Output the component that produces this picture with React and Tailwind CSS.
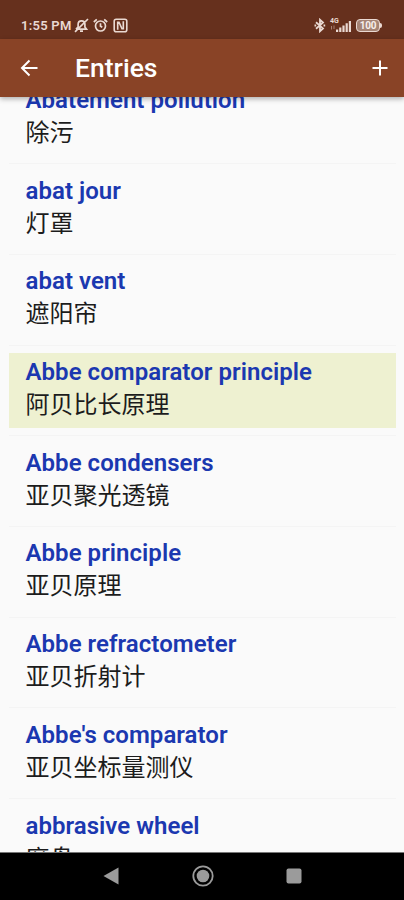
import React from 'react';

const ENTRIES = [
  { term: 'Abatement pollution', translation: '除污' },
  { term: 'abat jour', translation: '灯罩' },
  { term: 'abat vent', translation: '遮阳帘' },
  { term: 'Abbe comparator principle', translation: '阿贝比长原理', selected: true },
  { term: 'Abbe condensers', translation: '亚贝聚光透镜' },
  { term: 'Abbe principle', translation: '亚贝原理' },
  { term: 'Abbe refractometer', translation: '亚贝折射计' },
  { term: "Abbe's comparator", translation: '亚贝坐标量测仪' },
  { term: 'abbrasive wheel', translation: '磨盘' },
];

function StatusBar() {
  return (
    <div className="h-[39px] shrink-0 bg-[#66301d] text-[#ead9d2] flex items-start justify-between pl-[21px] pr-[21px] pt-[17px]">
      <div className="flex items-center h-[17px]">
        <span className="text-[13px] leading-[17px] font-semibold tracking-[0.25px] w-[53px] whitespace-nowrap">1:55 PM</span>
        {/* muted bell */}
        <svg width="15" height="15" viewBox="0 0 15 15" fill="none" stroke="currentColor" strokeWidth="1.7">
          <path d="M2 11.2h10.5L10.9 9V6.3c0-2.1-1.300-3.400-3.400-3.400S4.100 4.200 4.100 6.300V9L2 11.200M6 13.200h3M14 1 1 13.800" />
        </svg>
        {/* alarm */}
        <svg width="15" height="15" viewBox="0 0 15 15" fill="none" stroke="currentColor" strokeWidth="1.7" className="ml-[4px]">
          <circle cx="7.5" cy="8" r="5" />
          <path d="M7.5 5.300V8.300L9.300 9.300M.8 4 3.800 1.300M14.200 4 11.200 1.300" />
        </svg>
        {/* nfc */}
        <svg width="15" height="15" viewBox="0 0 15 15" fill="none" stroke="currentColor" strokeWidth="1.6" className="ml-[5px]">
          <rect x="1.2" y="1.2" width="12.6" height="12.6" rx="2" />
          <path d="M4.700 11.800V4.200h1.300L9 10.800h1.300V3.200" />
        </svg>
      </div>
      <div className="flex items-center h-[17px] pr-[1px]">
        <svg width="12" height="15" viewBox="0 0 12 15" fill="none" stroke="currentColor" strokeWidth="1.8">
          <path d="M2 4.300 9 10.400 6 13.200V1.800L9 4.600 2 10.700" />
          <path d="M.5 7.500h1.700M9.500 7.500h1.700" />
        </svg>
        <div className="flex items-end h-[15px] ml-[4px]">
          <div className="flex flex-col w-[9px] h-[15px]">
            <span className="text-[7px] leading-[7px] font-bold">4G</span>
            <svg width="6" height="5" viewBox="0 0 6 5" fill="none" stroke="currentColor" strokeWidth="0.8" opacity="0.6">
              <path d="M1.500 4.500V1M4 .5V4" />
            </svg>
          </div>
          <svg width="15" height="14" viewBox="0 0 15 14" fill="currentColor" className="-ml-[3px]">
            <path d="M0 10.500h2.200V13H0zM3.200 8.500h2.200V13H3.200zM6.400 6.500h2.200V13H6.400zM9.600 4.200h2.200V13H9.600zM12.800 2H15V13h-2.200z" />
          </svg>
        </div>
        <div className="flex items-center ml-[5px]">
          <div className="w-[24px] h-[13px] rounded-[4px] border border-current bg-[#a58475] flex items-center justify-center">
            <span className="text-[10px] leading-[10px] font-bold text-[#f7efeb] tracking-[-0.3px]">100</span>
          </div>
          <div className="w-[2px] h-[5px] rounded-r bg-current" />
        </div>
      </div>
    </div>
  );
}

function AppBar() {
  return (
    <div className="relative z-10 h-[58px] shrink-0 bg-[#894326] text-white flex items-center pl-[20px] pr-[16px] shadow-[0_2px_5px_rgba(0,0,0,0.3)]">
      <svg width="18" height="18" viewBox="0 0 18 18" fill="none" stroke="currentColor" strokeWidth="2">
        <path d="M17.500 9H2.500M9.500 1.500 2 9l7.500 7.500" />
      </svg>
      <h1 className="ml-[37px] text-[26.5px] leading-[32px] font-medium">Entries</h1>
      <svg width="16" height="16" viewBox="0 0 16 16" fill="none" stroke="currentColor" strokeWidth="2" className="ml-auto">
        <path d="M8 .5v15M.5 8h15" />
      </svg>
    </div>
  );
}

function Entry({ term, translation, selected }) {
  return (
    <li>
      <div className={`h-[75px] pl-[16.5px] pt-[3px] ${selected ? 'bg-[#eef1d1]' : ''}`}>
        <p className="text-[24px] leading-[32px] tracking-[0.04px] font-semibold text-[#1b38b0] whitespace-nowrap">{term}</p>
        <p className="text-[24px] leading-[30px] text-[#1c1c1c] whitespace-nowrap font-[Noto_Sans_CJK_SC,sans-serif] font-normal">{translation}</p>
      </div>
      <div className="h-[15.7px] flex items-center">
        <div className="h-px w-full bg-[#f4f4f4]" />
      </div>
    </li>
  );
}

function NavBar() {
  return (
    <div className="h-[48px] shrink-0 bg-black border-t border-[#777] flex items-center text-[#9b9b9b] pl-[103px] pr-[102px] pb-[2px] justify-between">
      <svg width="16" height="18" viewBox="0 0 16 18" fill="currentColor">
        <path d="M15.500.5v17L.5 9z" />
      </svg>
      <svg width="22" height="22" viewBox="0 0 22 22">
        <circle cx="11" cy="11" r="9.7" fill="none" stroke="currentColor" strokeWidth="1.8" />
        <circle cx="11" cy="11" r="6.3" fill="currentColor" />
      </svg>
      <svg width="16" height="16" viewBox="0 0 16 16" fill="currentColor">
        <rect x=".5" y=".5" width="15" height="15" rx="2" />
      </svg>
    </div>
  );
}

export default function App() {
  return (
    <div className="w-[404px] h-[900px] flex flex-col overflow-hidden bg-[#fafafa] font-[Roboto,Noto_Sans_CJK_SC,sans-serif]">
      <StatusBar />
      <AppBar />
      <main className="flex-1 min-h-0 overflow-hidden">
        <ul className="-mt-[16px] pl-[9px] pr-[8px]">
          {ENTRIES.map((e) => (
            <Entry key={e.term} {...e} />
          ))}
        </ul>
      </main>
      <NavBar />
    </div>
  );
}
